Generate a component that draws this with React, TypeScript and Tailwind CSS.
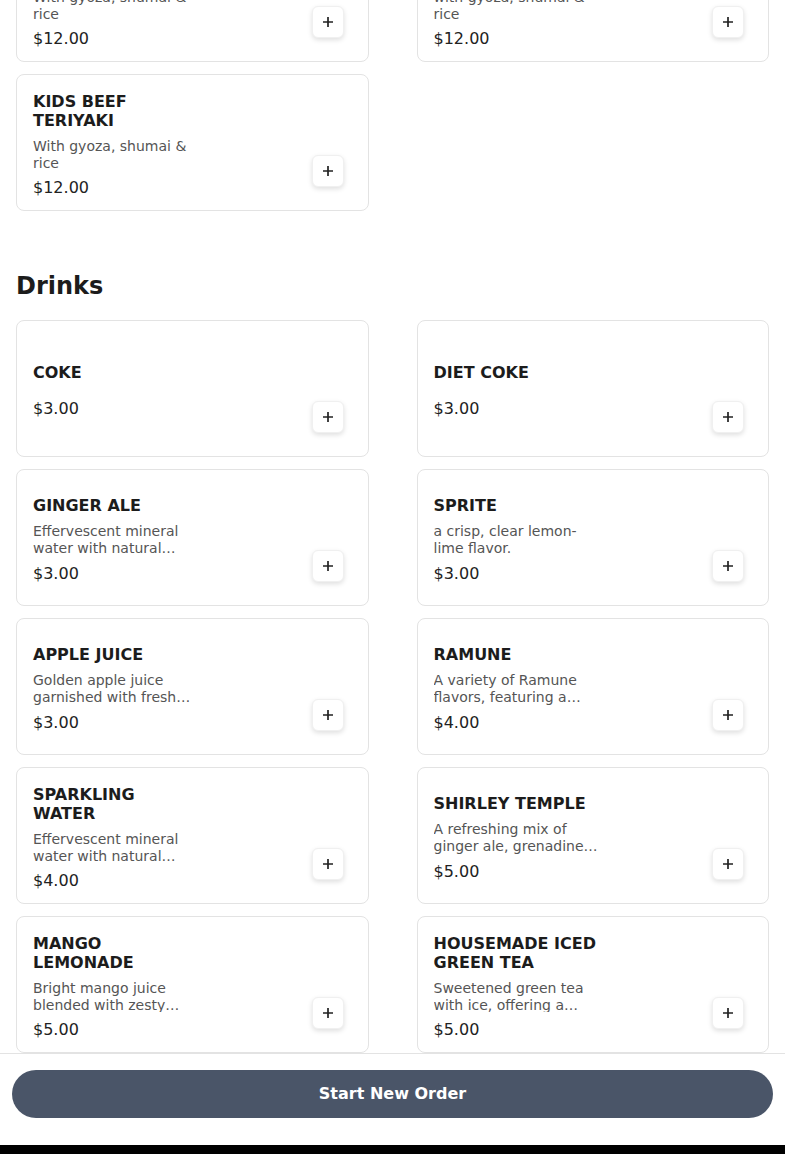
import React from "react";

type Item = { name: string; desc?: string; price: string };

const topItems: Item[] = [
  { name: "KIDS CHICKEN TERIYAKI", desc: "With gyoza, shumai & rice", price: "$12.00" },
  { name: "KIDS SALMON TERIYAKI", desc: "with gyoza, shumai & rice", price: "$12.00" },
  { name: "KIDS BEEF TERIYAKI", desc: "With gyoza, shumai & rice", price: "$12.00" },
];

const drinks: Item[] = [
  { name: "COKE", price: "$3.00" },
  { name: "DIET COKE", price: "$3.00" },
  {
    name: "GINGER ALE",
    desc: "Effervescent mineral water with natural ginger flavor and a hint of sweetness.",
    price: "$3.00",
  },
  { name: "SPRITE", desc: "a crisp, clear lemon-lime flavor.", price: "$3.00" },
  {
    name: "APPLE JUICE",
    desc: "Golden apple juice garnished with fresh apple slices.",
    price: "$3.00",
  },
  {
    name: "RAMUNE",
    desc: "A variety of Ramune flavors, featuring a classic Japanese marble soda.",
    price: "$4.00",
  },
  {
    name: "SPARKLING WATER",
    desc: "Effervescent mineral water with natural carbonation.",
    price: "$4.00",
  },
  {
    name: "SHIRLEY TEMPLE",
    desc: "A refreshing mix of ginger ale, grenadine, and a maraschino cherry.",
    price: "$5.00",
  },
  {
    name: "MANGO LEMONADE",
    desc: "Bright mango juice blended with zesty lemonade.",
    price: "$5.00",
  },
  {
    name: "HOUSEMADE ICED GREEN TEA",
    desc: "Sweetened green tea with ice, offering a refreshing taste.",
    price: "$5.00",
  },
];

function PlusIcon() {
  return (
    <svg width="12" height="12" viewBox="0 0 12 12" fill="none">
      <path d="M6 1v10M1 6h10" stroke="#222" strokeWidth="1.7" strokeLinecap="butt" />
    </svg>
  );
}

function Card({ item }: { item: Item }) {
  return (
    <div className="flex h-[137px] justify-between rounded-lg border border-[#e3e3e3] bg-white pl-4 pr-4 pt-[17px] pb-[10px]">
      <div className="flex w-[166px] flex-col justify-center">
        <div className="text-[16px] font-bold leading-[1.2] text-[#1c1c1c]">{item.name}</div>
        <p className="mt-2 mb-[6px] line-clamp-2 text-[14px] leading-[1.2] text-[#555]">
          {item.desc ?? ""}
        </p>
        <div className="text-[16px] leading-6 text-[#222]">{item.price}</div>
      </div>
      <div className="flex items-end">
        <button className="mb-[13px] mr-2 flex h-8 w-8 items-center justify-center rounded-md border border-[#f0f0f0] bg-white shadow-[0_2px_5px_rgba(0,0,0,0.13)]">
          <PlusIcon />
        </button>
      </div>
    </div>
  );
}

export default function App() {
  return (
    <div className="flex h-[1154px] flex-col bg-white font-['DejaVu_Sans',sans-serif]">
      <div className="flex-1 overflow-hidden">
        <div className="-mt-[75px] px-4">
          <div className="grid grid-cols-2 gap-x-12 gap-y-3">
            {topItems.map((it) => (
              <Card key={it.name} item={it} />
            ))}
          </div>
          <h2 className="mt-[57px] mb-4 text-2xl leading-9 font-bold text-[#1c1c1c]">Drinks</h2>
          <div className="grid grid-cols-2 gap-x-12 gap-y-3 pb-8">
            {drinks.map((it) => (
              <Card key={it.name} item={it} />
            ))}
          </div>
        </div>
      </div>
      <div className="border-t border-[#e3e3e3] bg-white px-3 pt-4 pb-[27px]">
        <button className="flex h-12 w-full items-center justify-center rounded-full bg-[#4a5568] text-[16px] font-bold text-white">
          Start New Order
        </button>
      </div>
      <div className="h-[9px] bg-black" />
    </div>
  );
}
